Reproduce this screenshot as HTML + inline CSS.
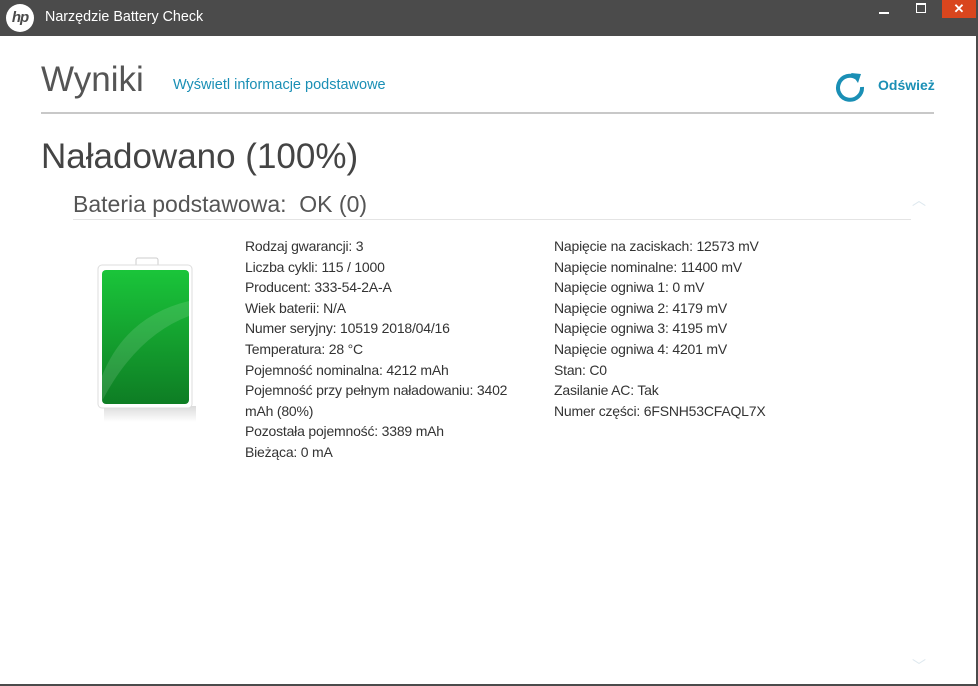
<!DOCTYPE html>
<html><head><meta charset="utf-8"><style>
body{margin:0;width:978px;height:686px;background:#fff;font-family:"Liberation Sans",sans-serif;position:relative;overflow:hidden;color:#333}
.tb{position:absolute;left:0;top:0;width:978px;height:36px;background:#4b4b4b;}
.tb .t{position:absolute;left:45px;top:9px;color:#fff;font-size:14.3px}
.logo{position:absolute;left:6px;top:4px;width:28px;height:28px;border-radius:50%;background:#fff;color:#4b4b4b;font:italic bold 15px "Liberation Sans",sans-serif;text-align:center;line-height:28px;letter-spacing:-1px}
.close{position:absolute;left:942px;top:0;width:34px;height:18px;background:#d9461e;color:#fff;text-align:center;font-size:13px;line-height:18px;font-weight:bold}
.min{position:absolute;left:879px;top:12px;width:10px;height:2px;background:#fff}
.max{position:absolute;left:916px;top:3px;width:8px;height:7px;border:1px solid #fff;border-top-width:2px}
.abs{position:absolute;white-space:nowrap}
.col{position:absolute;font-size:14px;line-height:20.6px;color:#333;letter-spacing:-0.2px}
</style></head><body>
<div class="tb"><div class="logo">hp</div><div class="t">Narzędzie Battery Check</div><div class="min"></div><div class="max"></div><div class="close">✕</div></div>
<div class="abs" style="left:41px;top:60px;font-size:35px;color:#555">Wyniki</div>
<div class="abs" style="left:173px;top:77px;font-size:14.5px;color:#1a8fb5">Wyświetl informacje podstawowe</div>
<svg class="abs" style="left:835px;top:70px" width="32" height="34" viewBox="0 0 32 34"><path d="M22 8 A12 12 0 1 0 27 17" fill="none" stroke="#1a8fb5" stroke-width="4"/><path d="M16 3 L26 4 L23 13 Z" fill="#1a8fb5"/></svg>
<div class="abs" style="left:878px;top:77px;font-size:14px;font-weight:bold;color:#1a8fb5">Odśwież</div>
<div class="abs" style="left:41px;top:112px;width:893px;height:2px;background:#c8c8c8"></div>
<div class="abs" style="left:41px;top:137px;font-size:35px;color:#444">Naładowano (100%)</div>
<div class="abs" style="left:73px;top:191px;font-size:23px;color:#555">Bateria podstawowa:&nbsp; OK (0)</div>
<div class="abs" style="left:73px;top:219px;width:838px;height:1px;background:#e4e4e4"></div>
<div class="abs" style="left:912px;top:190px;color:#dde8ee;font-size:14px">︿</div>
<div class="abs" style="left:912px;top:656px;color:#dde8ee;font-size:14px">﹀</div>
<svg class="abs" style="left:96px;top:256px" width="104" height="172" viewBox="0 0 104 172">
<defs><linearGradient id="g" x1="0" y1="0" x2="0" y2="1"><stop offset="0" stop-color="#1ac53a"/><stop offset="1" stop-color="#0e7d24"/></linearGradient>
<linearGradient id="s" x1="0" y1="0" x2="0" y2="1"><stop offset="0" stop-color="#ccc"/><stop offset="1" stop-color="#fff"/></linearGradient></defs>
<rect x="8" y="150" width="92" height="16" fill="url(#s)" opacity=".7"/>
<rect x="40" y="2" width="22" height="10" rx="2" fill="#fff" stroke="#ccc"/>
<rect x="2" y="9" width="94" height="143" rx="4" fill="#fff" stroke="#ddd"/>
<rect x="6" y="14" width="87" height="134" rx="4" fill="url(#g)"/>
<path d="M6 120 Q30 60 93 45 L93 60 Q40 80 6 145 Z" fill="#fff" opacity=".12"/>
</svg>
<div class="col" style="left:245px;top:236px">Rodzaj gwarancji: 3<br>Liczba cykli: 115 / 1000<br>Producent: 333-54-2A-A<br>Wiek baterii: N/A<br>Numer seryjny: 10519 2018/04/16<br>Temperatura: 28 °C<br>Pojemność nominalna: 4212 mAh<br>Pojemność przy pełnym naładowaniu: 3402<br>mAh (80%)<br>Pozostała pojemność: 3389 mAh<br>Bieżąca: 0 mA</div>
<div class="col" style="left:554px;top:236px">Napięcie na zaciskach: 12573 mV<br>Napięcie nominalne: 11400 mV<br>Napięcie ogniwa 1: 0 mV<br>Napięcie ogniwa 2: 4179 mV<br>Napięcie ogniwa 3: 4195 mV<br>Napięcie ogniwa 4: 4201 mV<br>Stan: C0<br>Zasilanie AC: Tak<br>Numer części: 6FSNH53CFAQL7X</div>
<div class="abs" style="left:976px;top:0;width:2px;height:686px;background:#4b4b4b"></div>
<div class="abs" style="left:0;top:684px;width:978px;height:2px;background:#4b4b4b"></div>
</body></html>
